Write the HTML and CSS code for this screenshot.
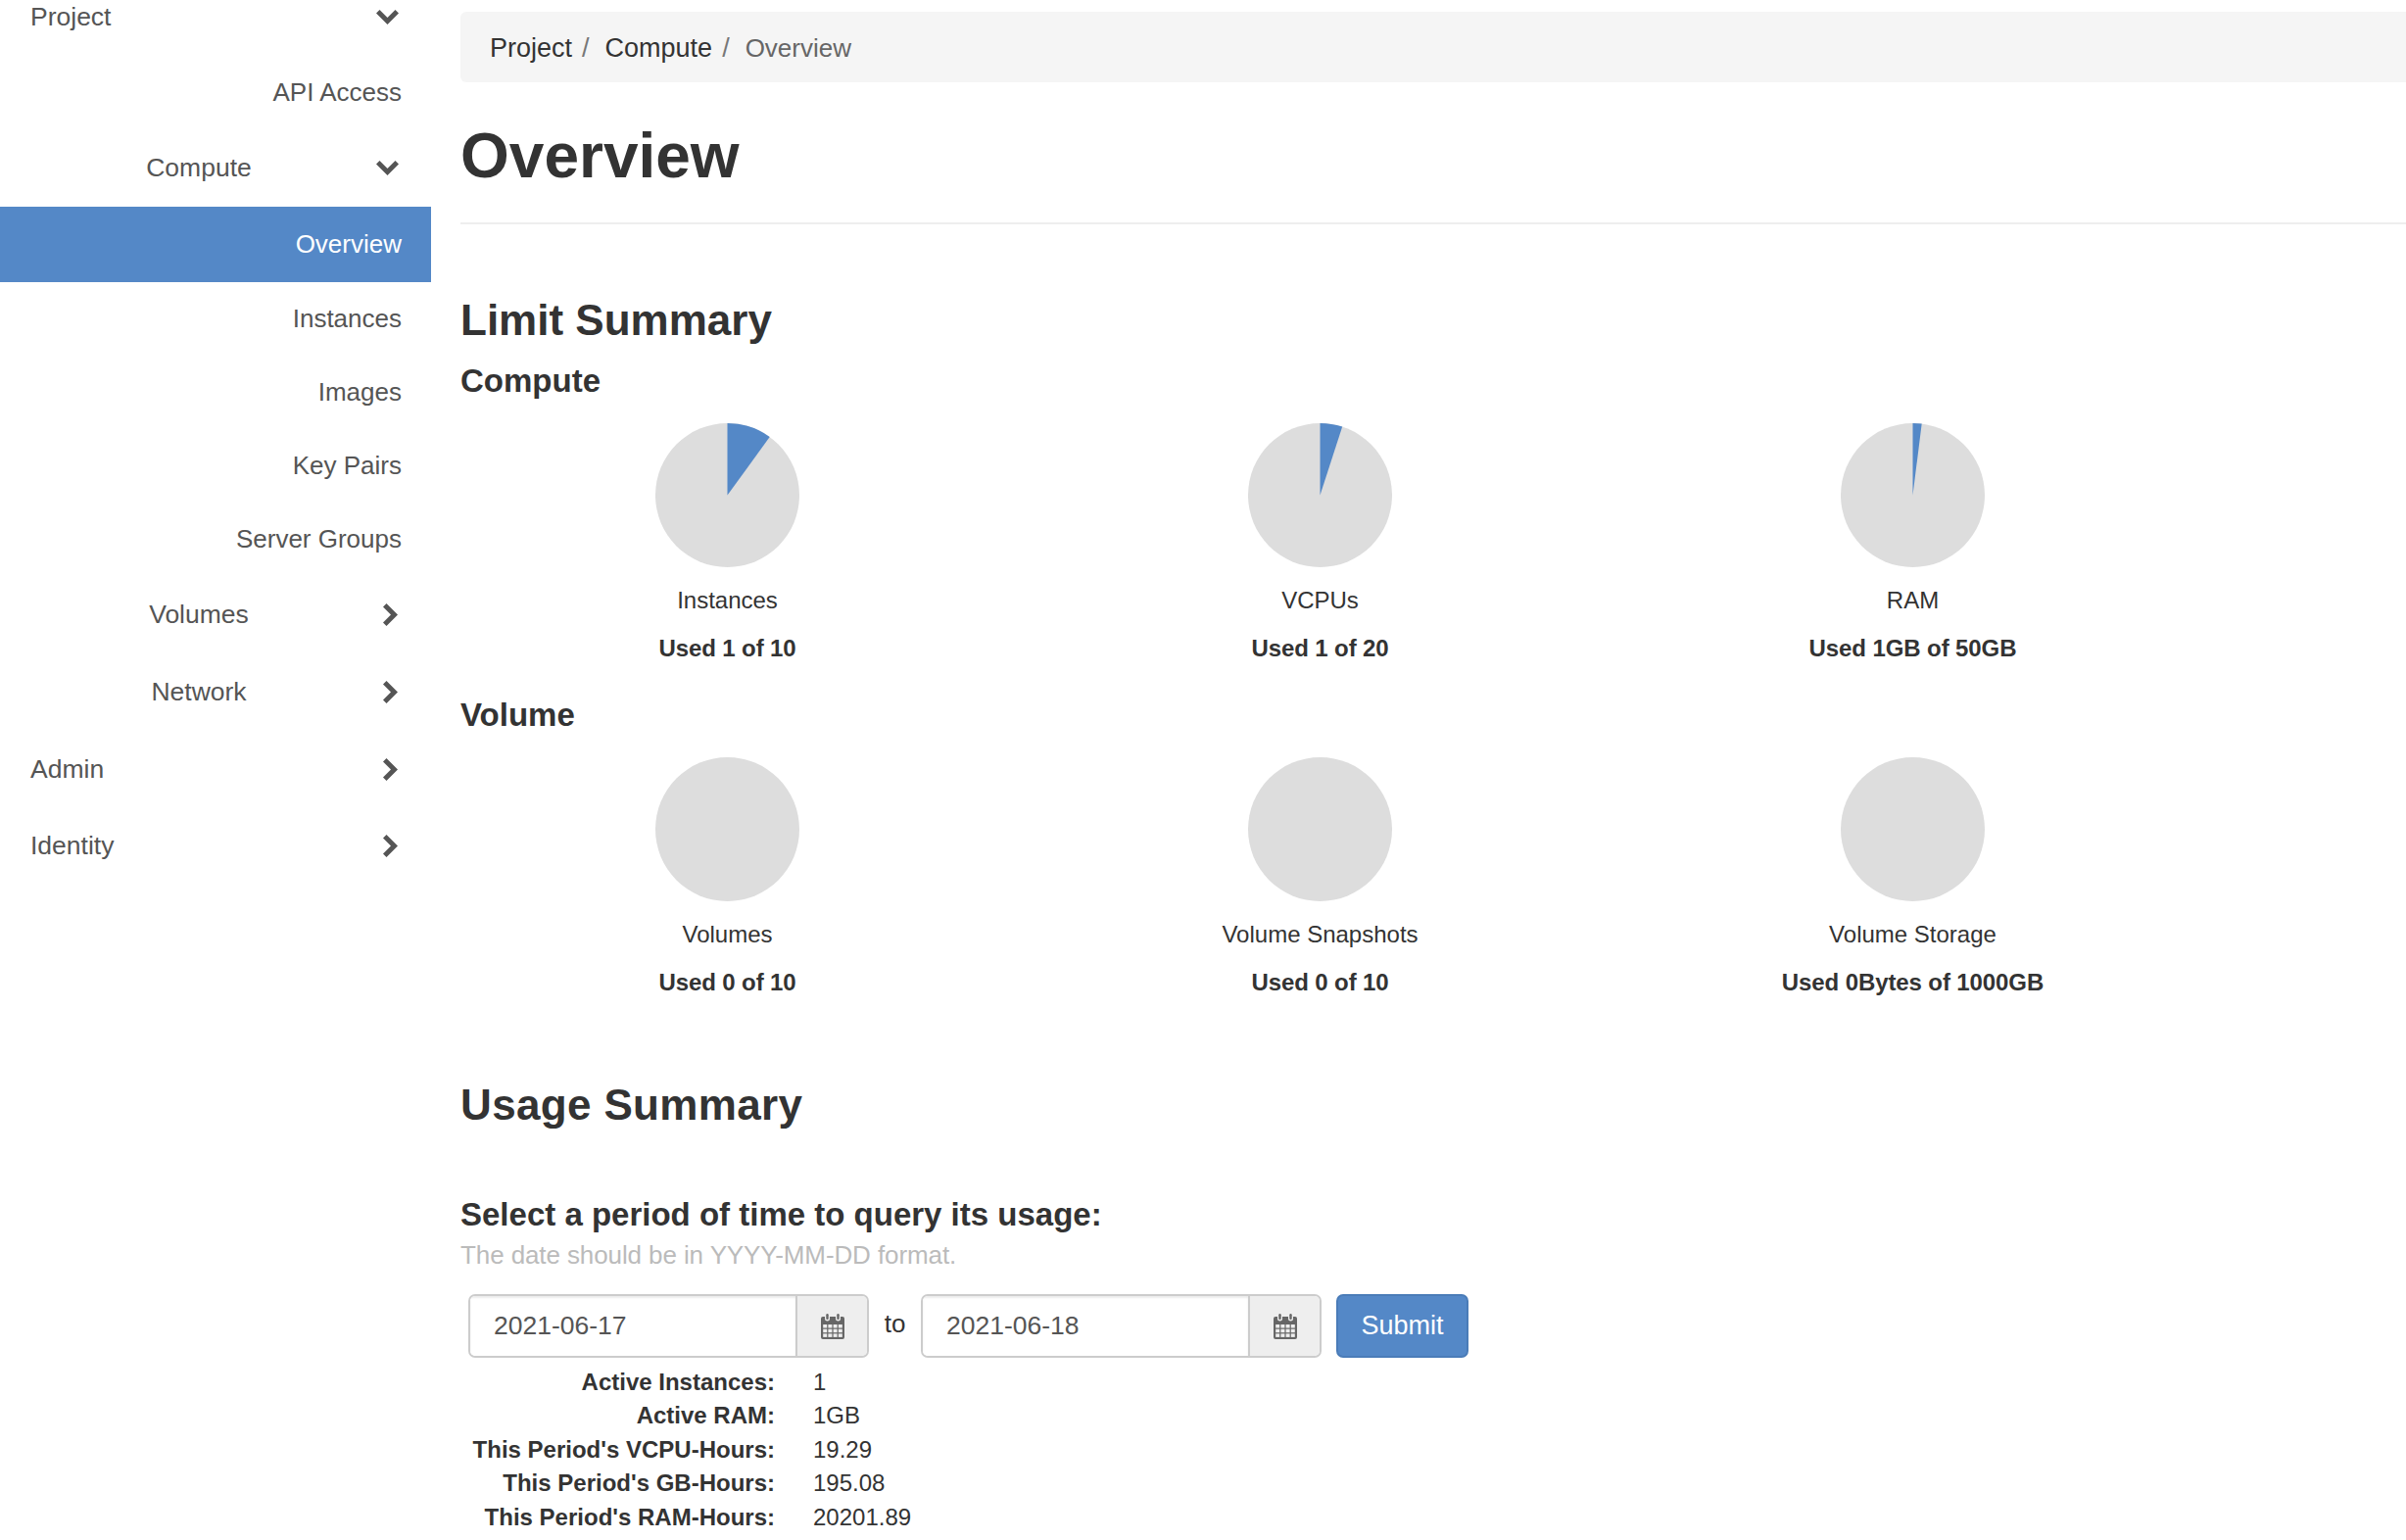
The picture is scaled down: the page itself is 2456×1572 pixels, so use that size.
FILE: index.html
```html
<!DOCTYPE html>
<html lang="en">
<head>
    <meta charset="UTF-8">
    <title>Instance Overview</title>
    <link rel="stylesheet" href="styles.css">
</head>
<body>
    <svg class="sprites" width="0" height="0">
        <symbol id="chev-down" viewBox="0 0 23 15"><path d="M0 3.500 3.500 0 11.500 8 19.500 0 23 3.500 11.500 15Z"/></symbol>
        <symbol id="chev-right" viewBox="0 0 15 23"><path d="M3.500 0 15 11.500 3.500 23 0 19.500 8 11.500 0 3.500Z"/></symbol>
        <symbol id="calendar" viewBox="0 0 24 26">
            <rect y="3" width="24" height="23" rx="2"/>
            <g class="cal-cells">
                <rect x="2.200" y="11" width="4" height="3.500"/>
                <rect x="7.400" y="11" width="4" height="3.500"/>
                <rect x="12.600" y="11" width="4" height="3.500"/>
                <rect x="17.800" y="11" width="4" height="3.500"/>
                <rect x="2.200" y="15.700" width="4" height="3.500"/>
                <rect x="7.400" y="15.700" width="4" height="3.500"/>
                <rect x="12.600" y="15.700" width="4" height="3.500"/>
                <rect x="17.800" y="15.700" width="4" height="3.500"/>
                <rect x="2.200" y="20.400" width="4" height="3.500"/>
                <rect x="7.400" y="20.400" width="4" height="3.500"/>
                <rect x="12.600" y="20.400" width="4" height="3.500"/>
                <rect x="17.800" y="20.400" width="4" height="3.500"/>
                <rect x="4" y="0" width="5" height="7.500" rx="2.500"/>
                <rect x="15" y="0" width="5" height="7.500" rx="2.500"/>
            </g>
            <rect x="5.300" y="0" width="2.400" height="6" rx="1.200"/>
            <rect x="16.300" y="0" width="2.400" height="6" rx="1.200"/>
        </symbol>
    </svg>

    <div class="page">
        <nav class="sidebar">
            <a class="nav-item top first">Project <svg class="chev-d"><use href="#chev-down"/></svg></a>
            <a class="nav-item sub">API Access</a>
            <a class="nav-item group"><span class="group-label">Compute</span> <svg class="chev-d"><use href="#chev-down"/></svg></a>
            <a class="nav-item sub active">Overview</a>
            <a class="nav-item sub">Instances</a>
            <a class="nav-item sub">Images</a>
            <a class="nav-item sub">Key Pairs</a>
            <a class="nav-item sub">Server Groups</a>
            <a class="nav-item group"><span class="group-label">Volumes</span> <svg class="chev-r"><use href="#chev-right"/></svg></a>
            <a class="nav-item group"><span class="group-label">Network</span> <svg class="chev-r"><use href="#chev-right"/></svg></a>
            <a class="nav-item top">Admin <svg class="chev-r"><use href="#chev-right"/></svg></a>
            <a class="nav-item top">Identity <svg class="chev-r"><use href="#chev-right"/></svg></a>
        </nav>

        <main class="content">
            <ol class="breadcrumb">
                <li>Project</li>
                <li>Compute</li>
                <li class="current">Overview</li>
            </ol>
            <h1 class="page-title">Overview</h1>

            <h2 class="limit-title">Limit Summary</h2>
            <h3 class="group-title">Compute</h3>
            <div class="pies">
                <div class="pie">
                    <svg width="147" height="147" viewBox="-73.5 -73.5 147 147"><circle r="73.5" class="pie-bg"/><path class="pie-used" d="M0 0V-73.500A73.500 73.500 0 0 1 43.200 -59.500Z"/></svg>
                    <div class="pie-name">Instances</div>
                    <div class="pie-used-text">Used 1 of 10</div>
                </div>
                <div class="pie">
                    <svg width="147" height="147" viewBox="-73.5 -73.5 147 147"><circle r="73.5" class="pie-bg"/><path class="pie-used" d="M0 0V-73.500A73.500 73.500 0 0 1 22.700 -69.900Z"/></svg>
                    <div class="pie-name">VCPUs</div>
                    <div class="pie-used-text">Used 1 of 20</div>
                </div>
                <div class="pie">
                    <svg width="147" height="147" viewBox="-73.5 -73.5 147 147"><circle r="73.5" class="pie-bg"/><path class="pie-used" d="M0 0V-73.500A73.500 73.500 0 0 1 9.200 -72.900Z"/></svg>
                    <div class="pie-name">RAM</div>
                    <div class="pie-used-text">Used 1GB of 50GB</div>
                </div>
            </div>

            <h3 class="group-title volume">Volume</h3>
            <div class="pies">
                <div class="pie">
                    <svg width="147" height="147" viewBox="-73.5 -73.5 147 147"><circle r="73.5" class="pie-bg"/></svg>
                    <div class="pie-name">Volumes</div>
                    <div class="pie-used-text">Used 0 of 10</div>
                </div>
                <div class="pie">
                    <svg width="147" height="147" viewBox="-73.5 -73.5 147 147"><circle r="73.5" class="pie-bg"/></svg>
                    <div class="pie-name">Volume Snapshots</div>
                    <div class="pie-used-text">Used 0 of 10</div>
                </div>
                <div class="pie">
                    <svg width="147" height="147" viewBox="-73.5 -73.5 147 147"><circle r="73.5" class="pie-bg"/></svg>
                    <div class="pie-name">Volume Storage</div>
                    <div class="pie-used-text">Used 0Bytes of 1000GB</div>
                </div>
            </div>

            <h2 class="usage-title">Usage Summary</h2>
            <h4 class="period-title">Select a period of time to query its usage:</h4>
            <p class="help-text">The date should be in YYYY-MM-DD format.</p>

            <form class="date-form">
                <div class="date-group">
                    <input class="date-input" type="text" value="2021-06-17">
                    <span class="date-addon"><svg class="cal"><use href="#calendar"/></svg></span>
                </div>
                <span class="to">to</span>
                <div class="date-group">
                    <input class="date-input" type="text" value="2021-06-18">
                    <span class="date-addon"><svg class="cal"><use href="#calendar"/></svg></span>
                </div>
                <button class="submit" type="button">Submit</button>
            </form>

            <dl class="usage-list">
                <dt>Active Instances:</dt><dd>1</dd>
                <dt>Active RAM:</dt><dd>1GB</dd>
                <dt>This Period's VCPU-Hours:</dt><dd>19.29</dd>
                <dt>This Period's GB-Hours:</dt><dd>195.08</dd>
                <dt>This Period's RAM-Hours:</dt><dd>20201.89</dd>
            </dl>
        </main>
    </div>
</body>
</html>
```

FILE: styles.css
```css
* {
    box-sizing: border-box;
}

html, body {
    height: 100%;
}

body {
    margin: 0;
    overflow: hidden;
    background: #fff;
    color: #333;
    font-family: 'Liberation Sans', Arial, sans-serif;
    font-size: 27px;
}

.sprites {
    position: absolute;
}

.page {
    display: flex;
    align-items: flex-start;
}

/* sidebar */
.sidebar {
    width: 440px;
    flex: none;
    margin-top: -22px;
    color: #555;
    font-size: 26.5px;
}

.nav-item {
    display: flex;
    align-items: center;
    justify-content: space-between;
    height: 78px;
    padding-right: 34px;
}

.nav-item.first {
    height: 79px;
}

.nav-item.top {
    padding-left: 31px;
}

.nav-item.group {
    padding-left: 148px;
    height: 79px;
}

.group-label {
    width: 110px;
    text-align: center;
}

.nav-item.sub {
    justify-content: flex-end;
    height: 75px;
    padding-right: 30px;
    font-size: 26px;
}

.nav-item.sub.active {
    height: 77px;
    background: #5488c7;
    color: #fff;
}

.chev-d {
    width: 23px;
    height: 15px;
    margin-right: -1px;
    fill: #555;
}

.chev-r {
    width: 15px;
    height: 23px;
    margin-right: 0;
    fill: #555;
}

/* main column */
.content {
    flex: 1;
    min-width: 0;
    margin-left: 30px;
    padding-top: 12px;
}

.breadcrumb {
    display: flex;
    align-items: center;
    height: 72px;
    margin: 0;
    padding: 2px 30px 0;
    background: #f5f5f5;
    border-radius: 6px 0 0 6px;
    list-style: none;
    font-size: 27px;
}

.breadcrumb li:not(:last-child)::after {
    content: "/";
    padding: 0 16px 0 10px;
    color: #777;
}

.breadcrumb .current {
    color: #666;
    font-size: 26px;
}

.page-title {
    height: 145px;
    margin: 0;
    padding-top: 38px;
    border-bottom: 2px solid #eee;
    font-size: 64px;
    line-height: 74px;
    font-weight: bold;
}

.limit-title, .usage-title {
    margin: 0;
    font-size: 44px;
    line-height: 52px;
}

.limit-title {
    margin-top: 72px;
}

.usage-title {
    margin-top: 82px;
    letter-spacing: .35px;
}

.group-title {
    margin: 16px 0 0;
    font-size: 33px;
    line-height: 40px;
}

.group-title.volume {
    margin-top: 31px;
}

.pies {
    display: grid;
    grid-template-columns: repeat(3, 605px);
    margin: 23px 0 0 -30px;
}

.group-title.volume + .pies {
    margin-top: 23px;
}

.pie {
    display: flex;
    flex-direction: column;
    align-items: center;
}

.pie-bg {
    fill: #ddd;
}

.pie-used {
    fill: #5488c7;
}

.pie-name {
    margin-top: 17px;
    font-size: 24px;
    line-height: 34px;
}

.pie-used-text {
    margin-top: 15px;
    font-size: 24px;
    line-height: 34px;
    font-weight: bold;
    letter-spacing: -.1px;
}

.period-title {
    margin: 66px 0 0;
    font-size: 33px;
    line-height: 40px;
}

.help-text {
    margin: 4px 0 0;
    color: #bbb;
    font-size: 26px;
    line-height: 34px;
    letter-spacing: -.1px;
}

.date-form {
    display: flex;
    align-items: center;
    margin: 23px 0 0 8px;
}

.date-group {
    display: flex;
    width: 409px;
    height: 65px;
    border: 2px solid #ccc;
    border-radius: 7px;
    overflow: hidden;
}

.date-input {
    width: 332px;
    padding: 0 24px;
    border: 0;
    outline: 0;
    color: #555;
    font-family: inherit;
    font-size: 26.5px;
    box-shadow: inset 0 2px 2px rgba(0, 0, 0, .08);
}

.date-addon {
    flex: 1;
    display: flex;
    align-items: center;
    justify-content: center;
    background: #eee;
    border-left: 2px solid #ccc;
}

.cal {
    width: 24px;
    height: 26px;
    fill: #666;
}

.cal-cells {
    fill: #eee;
}

.to {
    width: 53px;
    margin-top: -4px;
    text-align: center;
    font-size: 26px;
}

.submit {
    width: 135px;
    height: 65px;
    margin-left: 15px;
    padding: 0;
    border: 2px solid #4a7cb8;
    border-radius: 7px;
    background: #5488c7;
    color: #fff;
    font-family: inherit;
    font-size: 27px;
}

.usage-list {
    display: grid;
    grid-template-columns: 321px auto;
    column-gap: 39px;
    margin: 8px 0 0;
    font-size: 24px;
    line-height: 34.4px;
}

.usage-list dt {
    font-weight: bold;
    text-align: right;
}

.usage-list dd {
    margin: 0;
}
```
